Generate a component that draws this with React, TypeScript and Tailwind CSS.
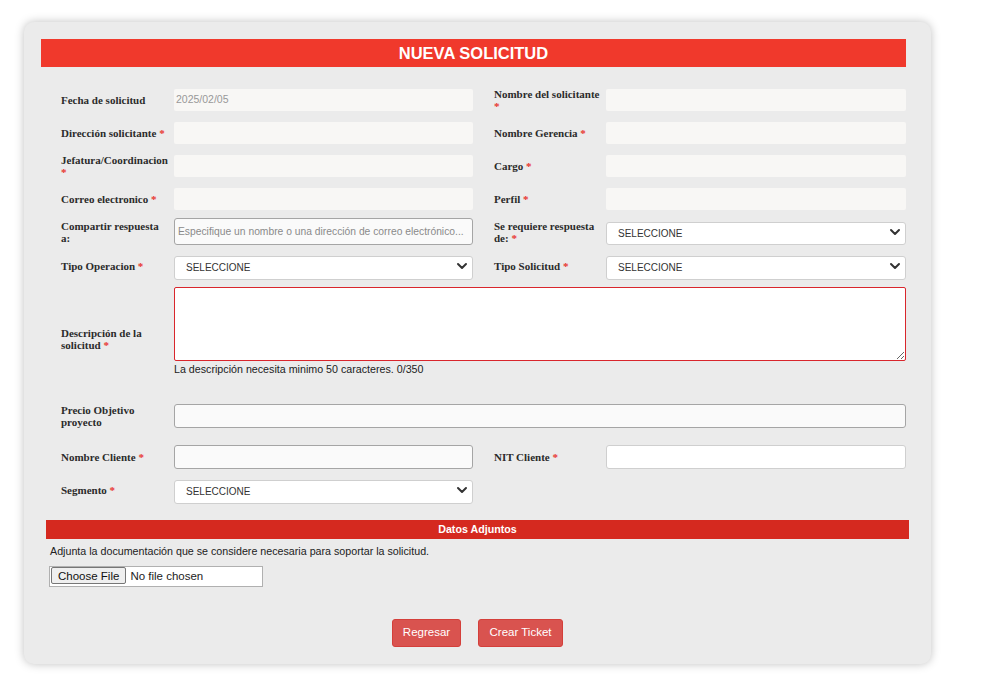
import React from "react";

const labelCls =
  "text-[11px] leading-[12px] font-bold text-[#2b2b2b] font-['Liberation_Serif',serif]";

function Req() {
  return <span className="text-[#e8322b]"> *</span>;
}

function Label({ children, w }: { children: React.ReactNode; w: string }) {
  return <div className={`${labelCls} ${w} shrink-0`}>{children}</div>;
}

function ReadOnly({ value, w }: { value?: string; w: string }) {
  return (
    <div
      className={`${w} h-[22px] bg-[#f8f7f5] rounded-[2px] flex items-center pl-[2px] text-[10.5px] text-[#999]`}
    >
      {value}
    </div>
  );
}

function Chevron() {
  return (
    <svg
      className="absolute right-[5px] top-1/2 -translate-y-1/2"
      width="12"
      height="12"
      viewBox="0 0 12 12"
      fill="none"
    >
      <path d="M2 4l4 4 4-4" stroke="#333" strokeWidth="2" strokeLinecap="round" strokeLinejoin="round" />
    </svg>
  );
}

function Select({ w, h }: { w: string; h: string }) {
  return (
    <div className={`relative ${w} ${h}`}>
      <select className="appearance-none w-full h-full bg-white border border-[#cfcfcf] rounded-[3px] pl-[11px] text-[10px] text-[#333] outline-none">
        <option>SELECCIONE</option>
      </select>
      <Chevron />
    </div>
  );
}

export default function App() {
  return (
    <div className="bg-white min-h-[691px] pt-[22px] pl-[24px] font-['Liberation_Sans',Arial,sans-serif]">
      <div className="w-[907px] bg-[#ebebeb] rounded-[10px] shadow-[0_0_10px_rgba(0,0,0,0.25)] pt-[17px] pb-[17px]">
        <div className="ml-[17px] mr-[25px] h-[28px] bg-[#f0392c] flex items-center justify-center text-white text-[16.5px] font-bold">
          NUEVA SOLICITUD
        </div>

        <div className="ml-[37px] mr-[25px]">
          {/* row 1 */}
          <div className="mt-[22px] flex items-center h-[22px]">
            <Label w="w-[113px]">Fecha de solicitud</Label>
            <ReadOnly w="w-[299px]" value="2025/02/05" />
            <div className="w-[21px]" />
            <Label w="w-[112px]">
              Nombre del solicitante
              <br />
              <span className="text-[#e8322b]">*</span>
            </Label>
            <ReadOnly w="w-[300px]" />
          </div>
          {/* row 2 */}
          <div className="mt-[11px] flex items-center h-[22px]">
            <Label w="w-[113px]">
              Dirección solicitante<Req />
            </Label>
            <ReadOnly w="w-[299px]" />
            <div className="w-[21px]" />
            <Label w="w-[112px]">
              Nombre Gerencia<Req />
            </Label>
            <ReadOnly w="w-[300px]" />
          </div>
          {/* row 3 */}
          <div className="mt-[11px] flex items-center h-[22px]">
            <Label w="w-[113px]">
              Jefatura/Coordinacion
              <br />
              <span className="text-[#e8322b]">*</span>
            </Label>
            <ReadOnly w="w-[299px]" />
            <div className="w-[21px]" />
            <Label w="w-[112px]">
              Cargo<Req />
            </Label>
            <ReadOnly w="w-[300px]" />
          </div>
          {/* row 4 */}
          <div className="mt-[11px] flex items-center h-[22px]">
            <Label w="w-[113px]">
              Correo electronico<Req />
            </Label>
            <ReadOnly w="w-[299px]" />
            <div className="w-[21px]" />
            <Label w="w-[112px]">
              Perfil<Req />
            </Label>
            <ReadOnly w="w-[300px]" />
          </div>
          {/* row 5 */}
          <div className="mt-[8px] flex items-center h-[27px]">
            <Label w="w-[113px]">
              Compartir respuesta
              <br />
              a:
            </Label>
            <input
              className="w-[299px] h-[27px] bg-[#fafafa] border border-[#a5a5a5] rounded-[3px] px-[3px] text-[10.3px] text-[#333] placeholder:text-[#8a8a8a] outline-none"
              placeholder="Especifique un nombre o una dirección de correo electrónico..."
            />
            <div className="w-[21px]" />
            <Label w="w-[112px]">
              Se requiere respuesta
              <br />
              de:<Req />
            </Label>
            <Select w="w-[300px]" h="h-[23px]" />
          </div>
          {/* row 6 */}
          <div className="mt-[9px] flex items-center h-[24px]">
            <Label w="w-[113px]">
              Tipo Operacion<Req />
            </Label>
            <Select w="w-[299px]" h="h-[24px]" />
            <div className="w-[21px]" />
            <Label w="w-[112px]">
              Tipo Solicitud<Req />
            </Label>
            <Select w="w-[300px]" h="h-[24px]" />
          </div>
          {/* row 7 */}
          <div className="mt-[9px] flex items-center">
            <Label w="w-[113px] pt-[14px]">
              Descripción de la
              <br />
              solicitud<Req />
            </Label>
            <div className="flex flex-col">
              <textarea className="w-[732px] h-[74px] bg-white border border-[#d9262c] rounded-[2px] outline-none block" />
              <div className="text-[10.7px] leading-[14px] text-[#222] mt-[1px]">
                La descripción necesita minimo 50 caracteres. 0/350
              </div>
            </div>
          </div>
          {/* row 8 */}
          <div className="mt-[28px] flex items-center h-[24px]">
            <Label w="w-[113px]">
              Precio Objetivo
              <br />
              proyecto
            </Label>
            <input className="w-[732px] h-[24px] bg-[#fafafa] border border-[#a5a5a5] rounded-[3px] outline-none" />
          </div>
          {/* row 9 */}
          <div className="mt-[17px] flex items-center h-[24px]">
            <Label w="w-[113px]">
              Nombre Cliente<Req />
            </Label>
            <input className="w-[299px] h-[24px] bg-[#fafafa] border border-[#a5a5a5] rounded-[3px] outline-none" />
            <div className="w-[21px]" />
            <Label w="w-[112px]">
              NIT Cliente<Req />
            </Label>
            <input className="w-[300px] h-[24px] bg-white border border-[#cfcfcf] rounded-[3px] outline-none" />
          </div>
          {/* row 10 */}
          <div className="mt-[9px] flex items-center h-[24px]">
            <Label w="w-[113px]">
              Segmento<Req />
            </Label>
            <Select w="w-[299px]" h="h-[24px]" />
          </div>
        </div>

        <div className="ml-[22px] mr-[22px] mt-[18px] h-[19px] bg-[#d5291f] flex items-center justify-center text-white text-[10.7px] font-bold">
          Datos Adjuntos
        </div>
        <div className="ml-[26px] mt-[5px] text-[10.7px] leading-[14px] text-[#222]">
          Adjunta la documentación que se considere necesaria para soportar la solicitud.
        </div>
        <div className="ml-[25px] mt-[8px] w-[214px] h-[21px] border border-[#b0b0b0] bg-white flex items-center pl-[1px]">
          <input
            type="file"
            className="text-[11.5px] text-[#222] w-[210px] file:h-[17px] file:px-[6px] file:mr-[4px] file:border file:border-[#767676] file:bg-[#efefef] file:rounded-[2px] file:text-[#111]"
          />
        </div>

        <div className="mt-[32px] flex justify-center gap-[17px]">
          <button className="h-[28px] w-[69px] bg-[#d9534f] border border-[#d43f3a] rounded-[3px] text-white text-[11.5px]">
            Regresar
          </button>
          <button className="h-[28px] w-[85px] bg-[#d9534f] border border-[#d43f3a] rounded-[3px] text-white text-[11.5px]">
            Crear Ticket
          </button>
        </div>
      </div>
    </div>
  );
}
